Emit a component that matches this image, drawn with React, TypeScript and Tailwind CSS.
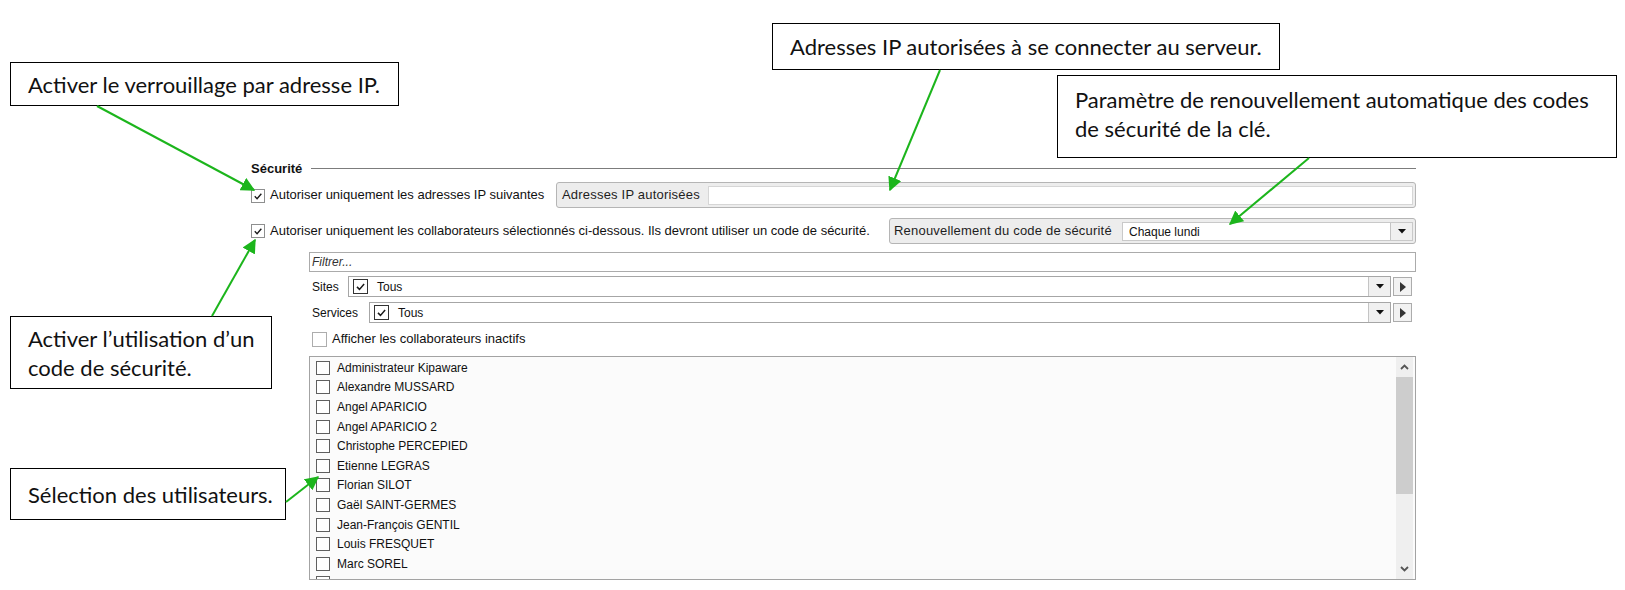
import React from "react";

const GREEN = "#1cb51c";

const USERS = [
  "Administrateur Kipaware",
  "Alexandre MUSSARD",
  "Angel APARICIO",
  "Angel APARICIO 2",
  "Christophe PERCEPIED",
  "Etienne LEGRAS",
  "Florian SILOT",
  "Gaël SAINT-GERMES",
  "Jean-François GENTIL",
  "Louis FRESQUET",
  "Marc SOREL",
];

function Tick() {
  return (
    <svg viewBox="0 0 14 14" className="w-full h-full">
      <path d="M3.2 7.4 L5.9 10.1 L10.9 4.4" fill="none" stroke="#1a1a1a" strokeWidth="1.6" />
    </svg>
  );
}

function Box({ checked = false, className = "" }: { checked?: boolean; className?: string }) {
  return (
    <span className={`shrink-0 bg-white flex items-center justify-center ${className}`}>
      {checked && <Tick />}
    </span>
  );
}

function DropButton({ className = "" }: { className?: string }) {
  return (
    <span className={`shrink-0 flex items-center justify-center bg-[#f0f0f0] border-l border-[#c4c4c4] ${className}`}>
      <svg width="8" height="5" viewBox="0 0 8 5">
        <path d="M0 0 H8 L4 4.5 Z" fill="#111" />
      </svg>
    </span>
  );
}

function NextButton() {
  return (
    <span className="shrink-0 ml-[2px] w-[19px] h-[19px] flex items-center justify-center bg-[#f2f2f2] border border-[#acacac]">
      <svg width="6" height="10" viewBox="0 0 6 10">
        <path d="M0 0 L6 5 L0 10 Z" fill="#333" />
      </svg>
    </span>
  );
}

function Callout({ className, lines }: { className: string; lines: string[] }) {
  return (
    <div
      className={`absolute bg-white border border-black flex flex-col justify-center pl-[17px] text-[22px] leading-[29px] text-[#111] font-['Lato','Open_Sans',sans-serif] ${className}`}
    >
      {lines.map((l) => (
        <div key={l} className="whitespace-nowrap">
          {l}
        </div>
      ))}
    </div>
  );
}

export default function App() {
  return (
    <div className="relative w-[1625px] h-[590px] bg-white overflow-hidden font-['Liberation_Sans','Arial',sans-serif] text-[#111]">
      {/* settings form */}
      <div className="pl-[251px] pt-[160px] pr-[209px]">
        <div className="flex items-center h-[16px]">
          <span className="text-[13px] font-bold leading-none">Sécurité</span>
          <span className="ml-[9px] flex-1 h-px bg-[#7c7c7c]" />
        </div>

        <div className="mt-[6px] flex items-center h-[26px]">
          <Box checked className="w-[14px] h-[14px] border border-[#8e8f8f] mt-[2px]" />
          <span className="ml-[5px] flex-1 text-[13px] whitespace-nowrap">
            Autoriser uniquement les adresses IP suivantes
          </span>
          <div className="w-[860px] h-[26px] flex items-center border border-[#b5b5b5] rounded-[3px] bg-[#ededed] pr-[2px]">
            <span className="w-[151px] pl-[5px] text-[13px] tracking-[0.2px] text-[#1e1e1e] whitespace-nowrap">
              Adresses IP autorisées
            </span>
            <span className="flex-1 h-[19px] mt-[1px] bg-white border border-[#d6d6d6]" />
          </div>
        </div>

        <div className="mt-[10px] flex items-center h-[26px]">
          <Box checked className="w-[14px] h-[14px] border border-[#8e8f8f]" />
          <span className="ml-[5px] flex-1 text-[13px] whitespace-nowrap">
            Autoriser uniquement les collaborateurs sélectionnés ci-dessous. Ils devront utiliser un code de sécurité.
          </span>
          <div className="w-[527px] h-[26px] flex items-center border border-[#b5b5b5] rounded-[3px] bg-[#ededed] pr-[2px]">
            <span className="w-[232px] pl-[4px] text-[13px] tracking-[0.2px] text-[#1e1e1e] whitespace-nowrap">
              Renouvellement du code de sécurité
            </span>
            <span className="flex-1 h-[19px] mt-[1px] flex items-center bg-white border border-[#c9c9c9]">
              <span className="flex-1 pl-[6px] text-[12px]">Chaque lundi</span>
              <DropButton className="w-[22px] h-full" />
            </span>
          </div>
        </div>

        <div className="pl-[58px]">
          <div className="mt-[8px] h-[20px] flex items-center border border-[#ababab] bg-white pl-[2px]">
            <span className="text-[12px] italic text-[#333]">Filtrer...</span>
          </div>

          <div className="mt-[4px] h-[21px] flex items-center">
            <span className="w-[39px] pl-[3px] text-[12px]">Sites</span>
            <span className="flex-1 h-full flex items-center border border-[#a6a6a6] bg-white">
              <Box checked className="ml-[4px] w-[15px] h-[15px] border border-[#333]" />
              <span className="ml-[9px] flex-1 text-[12px]">Tous</span>
              <DropButton className="w-[22px] h-full" />
            </span>
            <NextButton />
            <span className="w-[4px]" />
          </div>

          <div className="mt-[5px] h-[21px] flex items-center">
            <span className="w-[60px] pl-[3px] text-[12px]">Services</span>
            <span className="flex-1 h-full flex items-center border border-[#a6a6a6] bg-white">
              <Box checked className="ml-[4px] w-[15px] h-[15px] border border-[#333]" />
              <span className="ml-[9px] flex-1 text-[12px]">Tous</span>
              <DropButton className="w-[22px] h-full" />
            </span>
            <NextButton />
            <span className="w-[4px]" />
          </div>

          <div className="mt-[8px] h-[16px] flex items-center">
            <Box className="ml-[3px] w-[15px] h-[15px] border border-[#adadad]" />
            <span className="ml-[5px] text-[13px]">Afficher les collaborateurs inactifs</span>
          </div>

          <div className="mt-[9px] h-[224px] flex border border-[#a3a3a3] bg-[#fbfbfb] overflow-hidden">
            <div className="flex-1 pt-[1px]">
              {USERS.map((u) => (
                <div key={u} className="h-[19.6px] flex items-center pl-[6px]">
                  <Box className="w-[14px] h-[14px] border border-[#5f5f5f]" />
                  <span className="ml-[7px] text-[12px] whitespace-nowrap">{u}</span>
                </div>
              ))}
              {/* next row, scrolled just out of view */}
              <div className="h-[19.6px] flex items-center pl-[6px]">
                <Box className="w-[14px] h-[14px] border border-[#5f5f5f]" />
              </div>
            </div>
            <div className="w-[17px] mr-[2px] flex flex-col bg-[#efefef]">
              <span className="h-[20px] flex items-center justify-center">
                <svg width="9" height="6" viewBox="0 0 9 6">
                  <path d="M1 5 L4.5 1.5 L8 5" fill="none" stroke="#555" strokeWidth="1.8" />
                </svg>
              </span>
              <span className="h-[117px] bg-[#cdcdcd]" />
              <span className="flex-1" />
              <span className="h-[20px] flex items-center justify-center">
                <svg width="9" height="6" viewBox="0 0 9 6">
                  <path d="M1 1 L4.5 4.5 L8 1" fill="none" stroke="#555" strokeWidth="1.8" />
                </svg>
              </span>
            </div>
          </div>
        </div>
      </div>

      {/* annotation callouts */}
      <Callout className="left-[10px] top-[62px] w-[389px] h-[44px]" lines={["Activer le verrouillage par adresse IP."]} />
      <Callout className="left-[772px] top-[23px] w-[508px] h-[47px]" lines={["Adresses IP autorisées à se connecter au serveur."]} />
      <Callout
        className="left-[1057px] top-[75px] w-[560px] h-[83px] pb-[6px]"
        lines={["Paramètre de renouvellement automatique des codes", "de sécurité de la clé."]}
      />
      <Callout className="left-[10px] top-[316px] w-[262px] h-[73px]" lines={["Activer l’utilisation d’un", "code de sécurité."]} />
      <Callout className="left-[10px] top-[468px] w-[276px] h-[52px]" lines={["Sélection des utilisateurs."]} />

      {/* pointer arrows */}
      <svg className="absolute left-0 top-0 pointer-events-none" width="1625" height="590" viewBox="0 0 1625 590">
        <defs>
          <marker id="head" viewBox="0 0 10 10" refX="9" refY="5" markerWidth="7" markerHeight="7" orient="auto">
            <path d="M0 0 L10 5 L0 10 Z" fill={GREEN} />
          </marker>
        </defs>
        <g stroke={GREEN} strokeWidth="2" fill="none">
          <line x1="97" y1="106" x2="254" y2="190" markerEnd="url(#head)" />
          <line x1="940" y1="70" x2="890" y2="190" markerEnd="url(#head)" />
          <line x1="1309" y1="158" x2="1230" y2="224" markerEnd="url(#head)" />
          <line x1="212" y1="316" x2="255" y2="240" markerEnd="url(#head)" />
          <line x1="286" y1="502" x2="318" y2="477" markerEnd="url(#head)" />
        </g>
      </svg>
    </div>
  );
}
